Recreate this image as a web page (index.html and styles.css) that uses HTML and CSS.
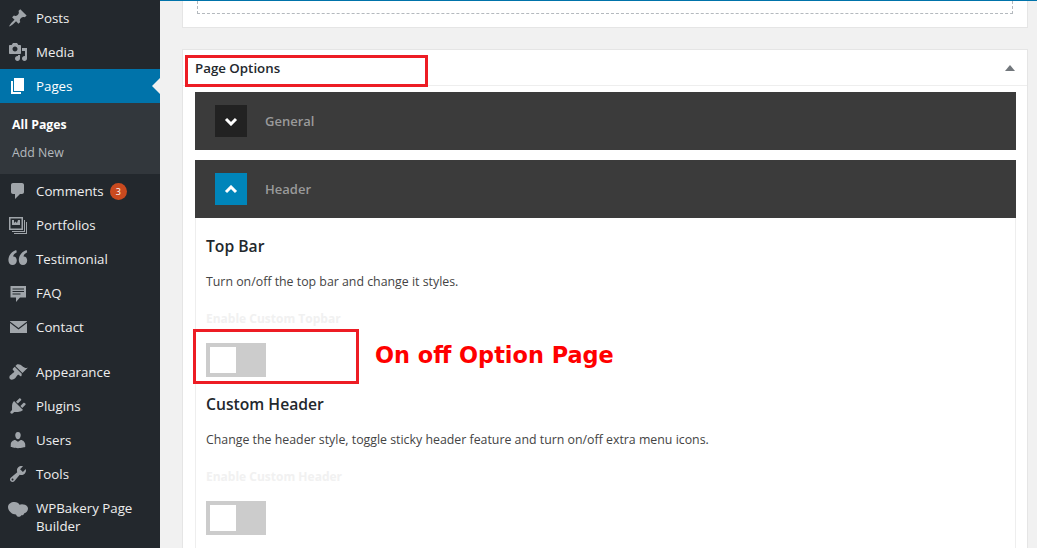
FILE: index.html
```html
<!DOCTYPE html>
<html lang="en">
<head>
<meta charset="utf-8">
<title>Edit Page</title>
<link rel="stylesheet" href="styles.css">
</head>
<body>
<div class="shell">
  <nav class="sidebar">
    <ul class="menu">
      <li class="item"><svg class="ico" viewBox="0 0 20 20"><path d="M10.44 3.02l1.82-1.82 6.36 6.35-1.83 1.82c-1.05-.68-2.48-.57-3.41.36l-.75.75c-.92.93-1.04 2.35-.35 3.41l-1.83 1.82-2.41-2.41-2.8 2.79c-.42.42-3.38 2.71-3.8 2.29s1.86-3.39 2.28-3.81l2.79-2.79L4.1 9.36l1.83-1.82c1.05.69 2.48.57 3.4-.36l.75-.75c.93-.92 1.05-2.35.36-3.41z"/></svg><span>Posts</span></li>
      <li class="item"><svg class="ico" viewBox="0 0 20 20"><path d="M13 11V4c0-.55-.45-1-1-1h-1.67L9 1H5L3.67 3H2c-.55 0-1 .45-1 1v7c0 .55.45 1 1 1h10c.55 0 1-.45 1-1zM7 4.5c1.38 0 2.5 1.12 2.5 2.5S8.38 9.5 7 9.5 4.5 8.38 4.5 7 5.62 4.5 7 4.5zM14 6h5v10.5c0 1.38-1.12 2.5-2.5 2.5S14 17.88 14 16.5s1.12-2.5 2.5-2.5c.17 0 .34.02.5.05V9h-3V6zm-4 8.05V13h2v3.5c0 1.38-1.12 2.5-2.5 2.5S7 17.88 7 16.5 8.12 14 9.5 14c.17 0 .34.02.5.05z"/></svg><span>Media</span></li>
      <li class="item active"><svg class="ico" viewBox="0 0 20 20"><path d="M6 15V2h10v13H6zm-1 1h8v2H3V5h2v11z"/></svg><span>Pages</span></li>
      <li class="submenu">
        <a class="sub current">All Pages</a>
        <a class="sub">Add New</a>
      </li>
      <li class="item"><svg class="ico" viewBox="0 0 20 20"><path d="M5 2h9c1.1 0 2 .9 2 2v7c0 1.1-.9 2-2 2h-2l-5 5v-5H5c-1.1 0-2-.9-2-2V4c0-1.1.9-2 2-2z"/></svg><span>Comments</span><b class="badge">3</b></li>
      <li class="item"><svg class="ico" viewBox="0 0 20 20"><path fill-rule="evenodd" d="M1 2h14v13H1zM2.500 3.500v10h11v-10zM4 5h2v3l1.500-1.500L9 8l1-3h2v5H4zM16 5h1v12H4v-1h12zM18 7h1v12H6v-1h12z"/></svg><span>Portfolios</span></li>
      <li class="item"><svg class="ico" viewBox="0 0 20 20"><path d="M8.200 1L8.800 3.200C6.300 4.500 5.300 6 5.100 7.500 7.300 7.300 8.800 9 8.800 11.500 8.800 14 7 16 4.600 16 2.100 16 .4 14 .4 11 .4 6.500 3.700 2.500 8.200 1zM18.600 1L19.200 3.200C16.700 4.500 15.700 6 15.500 7.500 17.700 7.300 19.200 9 19.200 11.500 19.200 14 17.400 16 15 16 12.500 16 10.800 14 10.800 11 10.800 6.500 14.100 2.500 18.600 1z"/></svg><span>Testimonial</span></li>
      <li class="item"><svg class="ico" viewBox="0 0 20 20"><path fill-rule="evenodd" d="M2.500 3H18v11.500h-6L8 19v-4.500H2.500zM4.500 5.500v1h11.500v-1zM4.500 8v1h11.500V8zM4.500 10.500v1h8v-1z"/></svg><span>FAQ</span></li>
      <li class="item"><svg class="ico" viewBox="0 0 20 20"><path d="M2 4h17v.6l-8.500 6.400L2 4.600zM2 6l8.500 6.500L19 6v10H2z"/></svg><span>Contact</span></li>
      <li class="item gap"><svg class="ico" viewBox="0 0 20 20"><path d="M14.480 11.060L7.410 3.990l1.500-1.500c.5-.56 2.300-.47 3.510.32 1.210.8 1.430 1.280 2.910 2.100 1.180.64 2.450 1.260 4.450.85zm-.71.71L6.700 4.700 4.930 6.470c-.39.39-.39 1.020 0 1.410l1.060 1.060c.39.39.39 1.030 0 1.420-.6.6-1.430 1.110-2.210 1.690-.35.26-.7.53-1.010.84C1.430 13.230.78 15.780 2 17c1.220 1.220 3.770.57 5.100-.77.31-.31.58-.66.84-1.010.58-.78 1.090-1.610 1.690-2.210.39-.39 1.020-.39 1.410 0l1.060 1.060c.39.39 1.020.39 1.410 0z"/></svg><span>Appearance</span></li>
      <li class="item"><svg class="ico" viewBox="0 0 20 20"><path d="M13.110 4.360L9.870 7.600 8 5.730l3.240-3.240c.35-.34 1.050-.2 1.560.32.52.51.66 1.210.31 1.550zm-8 1.770l.91-1.120 9.010 9.010-1.190.84c-.71.71-2.630 1.160-3.820 1.160H6.140L4.900 17.260c-.59.59-1.540.59-2.120 0-.59-.58-.59-1.530 0-2.120l1.240-1.240v-3.880c0-1.130.4-3.190 1.090-3.890zm7.260 3.970l3.240-3.240c.34-.35 1.040-.21 1.550.31.52.51.66 1.210.31 1.550l-3.240 3.250z"/></svg><span>Plugins</span></li>
      <li class="item"><svg class="ico" viewBox="0 0 20 20"><path d="M10 9.250c-2.270 0-2.730-3.440-2.730-3.440C7 4.020 7.820 2 9.970 2c2.160 0 2.980 2.020 2.710 3.810 0 0-.41 3.440-2.680 3.440zm0 2.570L12.720 10c2.390 0 4.520 2.330 4.520 4.530v2.490s-3.650 1.130-7.240 1.130c-3.650 0-7.240-1.130-7.240-1.130v-2.490c0-2.250 1.940-4.480 4.470-4.480z"/></svg><span>Users</span></li>
      <li class="item"><svg class="ico" viewBox="0 0 20 20"><path d="M16.680 9.770c-1.340 1.340-3.300 1.670-4.950.99l-5.410 6.520c-.99.99-2.590.99-3.580 0s-.99-2.590 0-3.570l6.520-5.420c-.68-1.650-.35-3.610.99-4.950 1.280-1.280 3.120-1.620 4.720-1.060l-2.890 2.890 2.820 2.820 2.860-2.870c.53 1.580.18 3.390-1.080 4.650zM3.810 16.210c.4.39 1.040.39 1.430 0 .4-.4.4-1.040 0-1.430-.39-.4-1.030-.4-1.430 0-.39.39-.39 1.030 0 1.430z"/></svg><span>Tools</span></li>
      <li class="item tall"><svg class="ico wide" viewBox="0 0 22 20"><path d="M1 8C1 5 4 3 7.500 3 10 3 11.500 4 12.500 5.700 14 5 16 5 18 5.800 20 6.600 21 8 21 9.800 21 12 19 13.800 17.300 14.300 16.800 16 15.300 16.600 14.300 16.200 13 18.300 10 18.500 9 15.500 5 15.500 1 12 1 8z"/></svg><span>WPBakery Page Builder</span></li>
    </ul>
  </nav>
  <main class="content">
    <section class="card stub"><div class="dropzone"></div></section>
    <section class="card options">
      <header class="card-head">
        <h2>Page Options</h2>
        <i class="caret"></i>
      </header>
      <div class="panel">
        <div class="bar">
          <span class="bar-btn"><svg viewBox="0 0 14 9"><path d="M2 2l5 5 5-5"/></svg></span>
          <span class="bar-title">General</span>
        </div>
        <div class="bar open">
          <span class="bar-btn"><svg viewBox="0 0 14 9"><path d="M2 7l5-5 5 5"/></svg></span>
          <span class="bar-title">Header</span>
        </div>
        <div class="fields">
          <h3>Top Bar</h3>
          <p class="desc">Turn on/off the top bar and change it styles.</p>
          <p class="label">Enable Custom Topbar</p>
          <div class="toggle"><span class="knob"></span></div>
          <h3 class="next">Custom Header</h3>
          <p class="desc">Change the header style, toggle sticky header feature and turn on/off extra menu icons.</p>
          <p class="label">Enable Custom Header</p>
          <div class="toggle"><span class="knob"></span></div>
        </div>
      </div>
    </section>
  </main>
  <div class="mark mark-title"></div>
  <div class="mark mark-toggle"></div>
  <div class="callout">On off Option Page</div>
</div>
</body>
</html>
```
FILE: styles.css
```css
* { box-sizing: border-box; }
html, body { margin: 0; height: 548px; overflow: hidden; }
body { font-family: "Open Sans", "Noto Sans", sans-serif; background: #f1f1f1; color: #23282d; }
.shell { position: relative; display: flex; height: 548px; overflow: hidden; }

.sidebar { flex: 0 0 160px; background: #23282d; padding-top: 1px; }
.menu { list-style: none; margin: 0; padding: 0; }
.item { position: relative; display: flex; align-items: center; height: 34px; padding-left: 8px; font-size: 13.3px; color: #eee; }
.item > span { margin-left: 8px; }
.ico { width: 20px; height: 20px; flex: none; fill: #a0a5aa; }
.ico.wide { width: 22px; margin-left: -1px; margin-right: -1px; }
.item.gap { margin-top: 11px; }
.item.tall { align-items: flex-start; height: 52px; padding-top: 8px; line-height: 18px; }
.item.tall > span { width: 112px; }
.item.active { background: #0073aa; color: #fff; }
.item.active .ico { fill: #fff; }
.item.active::after { content: ""; position: absolute; right: 0; top: 9px; border: 8px solid transparent; border-right-color: #f1f1f1; border-left-width: 0; }
.submenu { display: flex; flex-direction: column; height: 71px; padding-top: 8px; background: #32373c; }
.sub { display: block; height: 28px; line-height: 28px; padding-left: 12px; font-size: 12.3px; color: #b4b9be; }
.sub.current { color: #fff; font-weight: 700; }
.badge { display: flex; align-items: center; justify-content: center; width: 17px; height: 17px; margin-left: 6px; border-radius: 50%; background: #ca4a1f; color: #fff; font-size: 9px; font-weight: 400; }

.content { flex: 1; padding: 0 9px 0 22px; border-top: 1px solid #0073aa; min-width: 0; }
.card { background: #fff; border: 1px solid #e5e5e5; }
.stub { height: 27px; padding: 0 14px; border-top: 0; }
.dropzone { height: 13px; border: 1px dashed #b4b9be; border-top: 0; }
.options { margin-top: 21px; }
.card-head { display: flex; align-items: center; justify-content: space-between; height: 36px; padding: 0 12px; border-bottom: 1px solid #eee; }
.card-head h2 { margin: 0; font-size: 13.3px; font-weight: 600; color: #23282d; }
.caret { width: 0; height: 0; border: 5px solid transparent; border-top: 0; border-bottom: 6px solid #72777c; }
.panel { margin: 6px 11px 0 12px; }
.bar { display: flex; align-items: center; height: 58px; margin-bottom: 10px; padding-left: 20px; background: #3b3b3b; }
.bar.open { margin-bottom: 0; }
.bar-btn { display: flex; align-items: center; justify-content: center; width: 32px; height: 32px; background: #222; }
.open .bar-btn { background: #0085ba; }
.bar-btn svg { width: 14px; height: 9px; fill: none; stroke: #fff; stroke-width: 3; }
.bar-title { margin-left: 18px; font-size: 13px; font-weight: 600; color: #9a9a9a; }
.fields { padding: 16px 10px 60px; border-left: 1px solid #eee; border-right: 1px solid #eee; }
h3 { margin: 0; font-size: 15.7px; line-height: 24px; font-weight: 600; color: #23282d; }
.next { margin-top: 15px; }
.desc { margin: 15px 0 0; font-size: 12.35px; line-height: 18px; color: #444; }
.label { margin: 19px 0 0; font-size: 12px; line-height: 18px; font-weight: 700; color: #f1f1f1; }
.toggle { width: 60px; height: 34px; margin-top: 15px; padding: 4px; background: #ccc; }
.knob { display: block; width: 26px; height: 26px; background: #fff; }

.mark { position: absolute; border: 3px solid #ed1c24; }
.mark-title { left: 185px; top: 55px; width: 243px; height: 32px; }
.mark-toggle { left: 193px; top: 329px; width: 166px; height: 55px; }
.callout { position: absolute; left: 375px; top: 338px; font-family: "DejaVu Sans", sans-serif; font-size: 22.4px; line-height: 34px; font-weight: 700; color: #f00; white-space: nowrap; }
```
